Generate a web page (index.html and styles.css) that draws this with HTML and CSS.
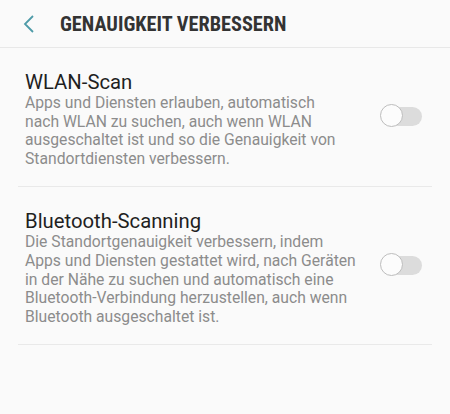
FILE: index.html
```html
<!DOCTYPE html>
<html lang="de">
<head>
<meta charset="utf-8">
<link rel="stylesheet" href="styles.css">
</head>
<body>
<header class="appbar">
  <svg class="back" width="12" height="18" viewBox="0 0 12 18"><path d="M10 1 L2 9 L10 17" fill="none" stroke="#4e9ba8" stroke-width="1.8"/></svg>
  <h1 class="title">GENAUIGKEIT VERBESSERN</h1>
</header>
<main class="list">
  <section class="item">
    <div class="text">
      <div class="item-title">WLAN-Scan</div>
      <div class="item-desc">Apps und Diensten erlauben, automatisch<br>nach WLAN zu suchen, auch wenn WLAN<br>ausgeschaltet ist und so die Genauigkeit von<br>Standortdiensten verbessern.</div>
    </div>
    <div class="switch"><span class="knob"></span></div>
  </section>
  <section class="item">
    <div class="text">
      <div class="item-title">Bluetooth-Scanning</div>
      <div class="item-desc">Die Standortgenauigkeit verbessern, indem<br>Apps und Diensten gestattet wird, nach Geräten<br>in der Nähe zu suchen und automatisch eine<br>Bluetooth-Verbindung herzustellen, auch wenn<br>Bluetooth ausgeschaltet ist.</div>
    </div>
    <div class="switch"><span class="knob"></span></div>
  </section>
</main>
</body>
</html>
```
FILE: styles.css
```css
html, body {
  margin: 0;
  padding: 0;
  background: #fafafa;
  font-family: Roboto, "Noto Sans", sans-serif;
}
.appbar {
  height: 47px;
  display: flex;
  align-items: center;
  border-bottom: 1px solid #e8e8e8;
}
.back {
  margin-left: 23px;
  margin-right: 25px;
}
.title {
  margin: 0;
  font-family: "Roboto Condensed", Roboto, sans-serif;
  font-stretch: condensed;
  font-weight: 700;
  font-size: 20.3px;
  color: #333333;
}
.list {
  padding: 0 18px;
}
.item {
  display: flex;
  align-items: center;
  padding: 22px 0 18px 7px;
  border-bottom: 1px solid #e9e9e9;
}
.text {
  width: 350px;
  white-space: nowrap;
}
.item-title {
  font-size: 20.3px;
  line-height: 24px;
  color: #1f1f1f;
}
.item-desc {
  font-size: 15.7px;
  line-height: 18.6px;
  color: #8c8c8c;
}
.switch {
  position: relative;
  margin-left: 10px;
  margin-bottom: 5px;
  width: 37px;
  height: 19px;
  border-radius: 10px;
  background: #dcdcdc;
}
.knob {
  position: absolute;
  left: -5px;
  top: -3px;
  width: 21px;
  height: 21px;
  border-radius: 50%;
  background: #fcfcfc;
  border: 1px solid #bdbdbd;
}
```
